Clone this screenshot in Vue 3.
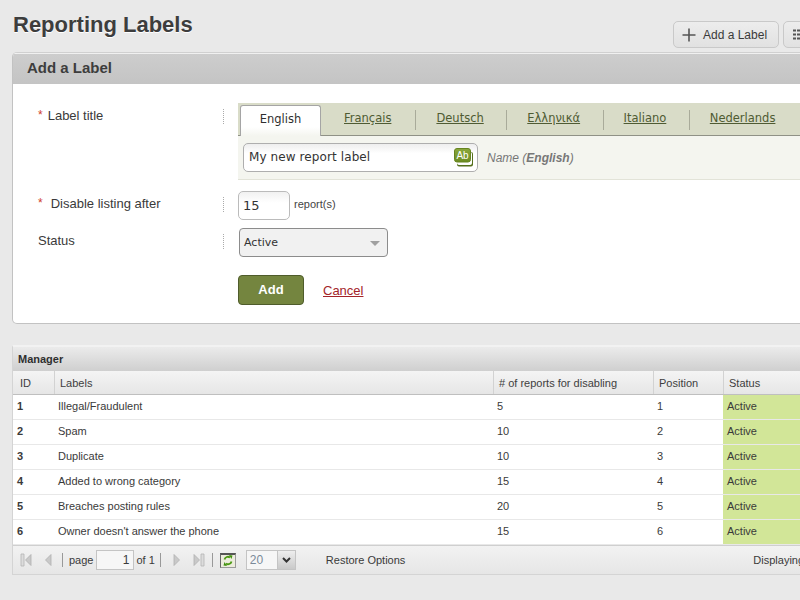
<template>
  <div class="page">
    <div class="page-head">
      <h1>Reporting Labels</h1>
      <div class="head-actions">
        <button class="head-btn add-btn">
          <svg width="14" height="14" viewBox="0 0 14 14"><path d="M7 0.500v13M0.500 7h13" stroke="#555" stroke-width="1.600" fill="none" /></svg>
          <span>Add a Label</span>
        </button>
        <button class="head-btn list-btn" aria-label="Manage">
          <svg width="14" height="11" viewBox="0 0 14 11"><path d="M0 1.500h3M0 5.500h3M0 9.500h3M4 1.500h9M4 5.500h9M4 9.500h9" stroke="#555" stroke-width="2.200" fill="none" /></svg>
        </button>
      </div>
    </div>

    <section class="form-panel">
      <h2>Add a Label</h2>
      <div class="form-body">
        <div class="form-row title-row">
          <label class="field-label"><span class="star">*</span><span class="gap-s">Label title</span></label>
          <div class="lang-box">
            <div class="tabs">
              <a
                v-for="(lang, i) in languages"
                :key="lang"
                :class="['tab', { active: i === 0 }]"
              >{{ lang }}</a>
            </div>
            <div class="lang-pane">
              <div class="text-input">
                <span>My new report label</span>
                <svg class="ab-icon" width="20" height="19" viewBox="0 0 20 19">
                  <rect x="3" y="4" width="16" height="14.500" rx="2" fill="#55701c" />
                  <rect x="3" y="4" width="15" height="13" rx="2" fill="#fff" />
                  <rect x="0.500" y="0.500" width="16" height="13.500" rx="2.500" fill="url(#abFill)" stroke="#66841f" />
                  <defs>
                    <linearGradient id="abFill" x1="0" y1="0" x2="0" y2="1">
                      <stop offset="0" stop-color="#8aa83c" />
                      <stop offset="1" stop-color="#6c8c22" />
                    </linearGradient>
                  </defs>
                  <text x="8.500" y="11" text-anchor="middle" class="ab-text">Ab</text>
                </svg>
              </div>
              <span class="name-hint">Name (<b>English</b>)</span>
            </div>
          </div>
        </div>

        <div class="form-row disable-row">
          <label class="field-label"><span class="star">*</span><span class="gap-l">Disable listing after</span></label>
          <div class="count-input">15</div>
          <span class="unit">report(s)</span>
        </div>

        <div class="form-row status-row">
          <label class="field-label">Status</label>
          <div class="select-box">
            <span>Active</span>
            <i class="caret"></i>
          </div>
        </div>

        <div class="form-actions">
          <button class="add-submit">Add</button>
          <a class="cancel">Cancel</a>
        </div>
      </div>
    </section>

    <section class="manager">
      <div class="manager-title">Manager</div>
      <div class="grid-row grid-head">
        <div v-for="col in columns" :key="col" class="cell">{{ col }}</div>
      </div>
      <div v-for="row in rows" :key="row.id" class="grid-row grid-body">
        <div class="cell id-cell">{{ row.id }}</div>
        <div class="cell">{{ row.label }}</div>
        <div class="cell">{{ row.reports }}</div>
        <div class="cell">{{ row.id }}</div>
        <div class="cell status-cell">Active</div>
      </div>
      <div class="pager">
        <svg class="pg-first" width="12" height="14" viewBox="0 0 12 14"><path d="M1 1h3v12H1z" fill="#dcdcdc" stroke="#b4b4b4" stroke-width="0.800" /><path d="M11 1.500v11L5.500 7z" fill="#c9c9c9" stroke="#b0b0b0" stroke-width="0.800" /></svg>
        <svg class="pg-prev" width="8" height="14" viewBox="0 0 8 14"><path d="M7 1.500v11L1.500 7z" fill="#c9c9c9" stroke="#b0b0b0" stroke-width="0.800" /></svg>
        <i class="pg-sep sep-a"></i>
        <span class="pg-word">page</span>
        <div class="pg-input">1</div>
        <span class="pg-of">of 1</span>
        <i class="pg-sep sep-b"></i>
        <svg class="pg-next" width="8" height="14" viewBox="0 0 8 14"><path d="M1 1.500v11L6.500 7z" fill="#c9c9c9" stroke="#b0b0b0" stroke-width="0.800" /></svg>
        <svg class="pg-last" width="12" height="14" viewBox="0 0 12 14"><path d="M1 1.500v11L6.500 7z" fill="#c9c9c9" stroke="#b0b0b0" stroke-width="0.800" /><path d="M8 1h3v12H8z" fill="#dcdcdc" stroke="#b4b4b4" stroke-width="0.800" /></svg>
        <i class="pg-sep sep-c"></i>
        <div class="pg-refresh">
          <svg width="10" height="11" viewBox="0 0 10 11"><path d="M1.500 4.500a3.500 3.500 0 0 1 5.500-2M8.500 6.500a3.500 3.500 0 0 1-5.500 2" stroke="#4b9a12" stroke-width="1.800" fill="none" /><path d="M6 0l3.500 0.500-1 3.500zM4 11l-3.500-0.500 1-3.500z" fill="#3f8f0e" /></svg>
        </div>
        <div class="pg-size">
          <span>20</span>
          <div class="pg-size-btn">
            <svg width="9" height="6" viewBox="0 0 9 6"><path d="M1 1l3.500 3.500L8 1" stroke="#333" stroke-width="2" fill="none" /></svg>
          </div>
        </div>
        <span class="pg-restore">Restore Options</span>
        <span class="pg-display">Displaying</span>
      </div>
    </section>
  </div>
</template>

<script setup>
const languages = ['English', 'Français', 'Deutsch', 'Ελληνικά', 'Italiano', 'Nederlands']

const columns = ['ID', 'Labels', '# of reports for disabling', 'Position', 'Status']

const rows = [
  { id: 1, label: 'Illegal/Fraudulent', reports: 5 },
  { id: 2, label: 'Spam', reports: 10 },
  { id: 3, label: 'Duplicate', reports: 10 },
  { id: 4, label: 'Added to wrong category', reports: 15 },
  { id: 5, label: 'Breaches posting rules', reports: 20 },
  { id: 6, label: "Owner doesn't answer the phone", reports: 15 }
]
</script>

<style>
html,
body {
  margin: 0;
  background: #e9e9e9;
  overflow: hidden;
}
</style>

<style scoped>
.page {
  width: 800px;
  height: 600px;
  overflow: hidden;
  background: #e9e9e9;
  font-family: "Liberation Sans", Arial, sans-serif;
  color: #3a3a3a;
}

.page-head {
  display: flex;
  justify-content: space-between;
  height: 52px;
  padding-left: 13px;
  width: 1000px;
  box-sizing: border-box;
}

h1 {
  margin: 12px 0 0;
  font-size: 22px;
  line-height: 26px;
  font-weight: bold;
  color: #3d3d3d;
  text-shadow: 0 1px 0 #fff;
}

.head-actions {
  display: flex;
  gap: 4px;
  padding-top: 21px;
  width: 327px;
}

.head-btn {
  display: flex;
  align-items: center;
  height: 27px;
  box-sizing: border-box;
  padding: 0 0 0 8px;
  border: 1px solid #c9c9c9;
  border-radius: 5px;
  background: linear-gradient(#ededed, #e1e1e1);
  font: 12px "Liberation Sans", Arial, sans-serif;
  color: #3a3a3a;
}

.add-btn {
  width: 106px;
  gap: 7px;
}

.list-btn {
  width: 120px;
  padding-left: 9px;
}

.form-panel {
  width: 1000px;
  height: 272px;
  margin-left: 12px;
  box-sizing: border-box;
  border: 1px solid #c2c2c2;
  border-top-color: #d0d0d0;
  border-radius: 5px;
  background: #fff;
  overflow: hidden;
}

h2 {
  margin: 0;
  height: 31px;
  padding: 0 0 0 14px;
  box-sizing: border-box;
  border-top: 1px solid #f0f0f0;
  background: linear-gradient(#cdcdcd, #c4c4c4);
  font-size: 15px;
  line-height: 28px;
  color: #3d3d3d;
}

.form-body {
  padding: 19px 0 0 25px;
}

.form-row {
  display: flex;
  align-items: flex-start;
}

.field-label {
  display: flex;
  width: 185px;
  height: 15px;
  margin-top: 6px;
  flex-shrink: 0;
  border-right: 1px dotted #aaa;
  font-size: 13px;
  line-height: 13px;
  color: #3a3a3a;
}

.star {
  color: #d0402c;
  font-size: 12px;
}

.gap-s {
  margin-left: 5px;
}

.gap-l {
  margin-left: 8px;
}

.lang-box {
  margin-left: 14px;
  width: 600px;
}

.tabs {
  display: flex;
  height: 33px;
  box-sizing: border-box;
  padding: 2px 0 0 2px;
  background: #d9dcc8;
  border-bottom: 1px solid #8f9186;
  font-family: "DejaVu Sans", sans-serif;
  font-size: 11.500px;
}

.tab {
  display: block;
  position: relative;
  padding: 6px 23.500px 0 20px;
  color: #4f5b33;
  text-decoration: underline;
}

.tab:nth-child(2) {
  padding-left: 23px;
  padding-right: 25px;
}

.tab:not(.active):not(:last-child)::after {
  content: "";
  position: absolute;
  right: 0;
  top: 5px;
  height: 20px;
  width: 1px;
  background: #a9ab9a;
}

.tab.active {
  width: 81px;
  box-sizing: border-box;
  height: 31px;
  padding: 6px 0 0;
  text-align: center;
  border: 1px solid #a5a5a5;
  border-bottom: none;
  border-radius: 3px 3px 0 0;
  background: linear-gradient(#fff 70%, #f4f5ef);
  color: #2f2f2f;
  text-decoration: none;
}

.lang-pane {
  display: flex;
  align-items: center;
  gap: 9px;
  height: 44px;
  padding-left: 5px;
  box-sizing: border-box;
  background: #f4f5ef;
  border-bottom: 1px solid #e2e3d8;
}

.text-input {
  position: relative;
  width: 235px;
  height: 29px;
  box-sizing: border-box;
  padding-left: 5px;
  border: 1px solid #aeaeae;
  border-radius: 5px;
  background: linear-gradient(#eee, #fff 35%);
  font-family: "DejaVu Sans", sans-serif;
  font-size: 12px;
  letter-spacing: 0.100px;
  line-height: 27px;
  color: #333;
}

.ab-icon {
  position: absolute;
  right: 3px;
  top: 4px;
}

.ab-text {
  font: 10px "Liberation Sans", sans-serif;
  fill: #fff;
  letter-spacing: 0;
}

.name-hint {
  font-size: 12px;
  font-style: italic;
  color: #777;
}

.disable-row {
  margin-top: 11px;
}

.count-input {
  width: 52px;
  height: 29px;
  margin-left: 14px;
  box-sizing: border-box;
  padding-left: 4px;
  border: 1px solid #bbb;
  border-radius: 5px;
  background: linear-gradient(#f1f1f1, #fff 40%);
  font-family: "DejaVu Sans", sans-serif;
  font-size: 13px;
  line-height: 28px;
  color: #333;
}

.unit {
  margin: 7px 0 0 4px;
  font-size: 11px;
  color: #444;
}

.status-row {
  margin-top: 8px;
}

.select-box {
  position: relative;
  width: 149px;
  height: 29px;
  margin-left: 15px;
  box-sizing: border-box;
  padding-left: 4px;
  border: 1px solid #8c8c8c;
  border-radius: 4px;
  background: #f1f1f1;
  font-family: "DejaVu Sans", sans-serif;
  font-size: 11px;
  line-height: 28px;
  color: #333;
}

.caret {
  position: absolute;
  right: 7px;
  top: 12px;
  border-left: 5px solid transparent;
  border-right: 5px solid transparent;
  border-top: 5px solid #a0a0a0;
}

.form-actions {
  display: flex;
  align-items: center;
  gap: 19px;
  margin: 18px 0 0 200px;
}

.add-submit {
  width: 66px;
  height: 30px;
  padding: 0 0 2px;
  border: 1px solid #4f5c2b;
  border-radius: 4px;
  background: #74853f;
  color: #fff;
  font: bold 13px "Liberation Sans", Arial, sans-serif;
}

.cancel {
  font-size: 13px;
  color: #a3242a;
  text-decoration: underline;
}

.manager {
  width: 1000px;
  margin: 21px 0 0 12px;
  box-sizing: border-box;
  border: 1px solid #d4d4d4;
  border-top: 2px solid #f2f2f2;
  font-size: 11px;
}

.manager-title {
  height: 24px;
  padding-left: 5px;
  box-sizing: border-box;
  background: linear-gradient(#ebebeb, #cfcfcf);
  font-weight: bold;
  line-height: 24px;
  color: #2f2f2f;
}

.grid-row {
  display: grid;
  grid-template-columns: 41px 439px 160px 70px 1fr;
}

.grid-head {
  height: 24px;
  box-sizing: border-box;
  background: linear-gradient(#f4f4f4, #e6e6e6);
  border-bottom: 1px solid #bfbfbf;
  line-height: 25px;
  color: #3e3e3e;
}

.grid-head .cell {
  height: 23px;
  padding-left: 5px;
  border-left: 1px solid #d2d2d2;
}

.grid-head .cell:first-child {
  padding-left: 7px;
  border-left: none;
}

.grid-body {
  height: 25px;
  box-sizing: border-box;
  background: #fff;
  border-bottom: 1px solid #e8e8e8;
  line-height: 23px;
  color: #3a3a3a;
}

.grid-body .cell {
  padding-left: 4px;
}

.grid-body .id-cell {
  font-weight: bold;
}

.grid-body .status-cell {
  background: #d2e698;
}

.pager {
  display: flex;
  align-items: center;
  height: 28px;
  padding-left: 7px;
  background: linear-gradient(#f2f2f2, #e6e6e6);
  border-top: 1px solid #cfcfcf;
  color: #3a3a3a;
}

.pg-sep {
  width: 1px;
  height: 14px;
  background: #999;
}

.pg-prev {
  margin-left: 12px;
}

.sep-a {
  margin-left: 10px;
}

.pg-word {
  margin-left: 6px;
}

.pg-input {
  width: 38px;
  height: 20px;
  margin-left: 3px;
  box-sizing: border-box;
  padding-right: 4px;
  border: 1px solid #c4c4c4;
  background: #f6f6f6;
  text-align: right;
  font-size: 12px;
  line-height: 18px;
}

.pg-of {
  margin-left: 2px;
}

.sep-b {
  margin-left: 5px;
}

.pg-next {
  margin-left: 12px;
}

.pg-last {
  margin-left: 12px;
}

.sep-c {
  margin-left: 7px;
}

.pg-refresh {
  display: flex;
  align-items: center;
  justify-content: center;
  width: 16px;
  height: 15px;
  margin-left: 7px;
  box-sizing: border-box;
  border: 1px solid #9a9a9a;
  border-top: 2px solid #555;
  border-left-color: #666;
  background: #ececdc;
}

.pg-size {
  display: flex;
  width: 50px;
  height: 20px;
  margin-left: 10px;
  box-sizing: border-box;
  border: 1px solid #c4c4c4;
  background: #f6f6f6;
  font-size: 12px;
  line-height: 18px;
  padding-left: 3px;
  color: #7b8a99;
}

.pg-size span {
  flex: 1;
}

.pg-size-btn {
  display: flex;
  align-items: center;
  justify-content: center;
  width: 17px;
  background: linear-gradient(#eee, #c9c9c9);
  border-left: 1px solid #c4c4c4;
}

.pg-restore {
  margin-left: 30px;
}

.pg-display {
  margin-left: 348px;
}
</style>
